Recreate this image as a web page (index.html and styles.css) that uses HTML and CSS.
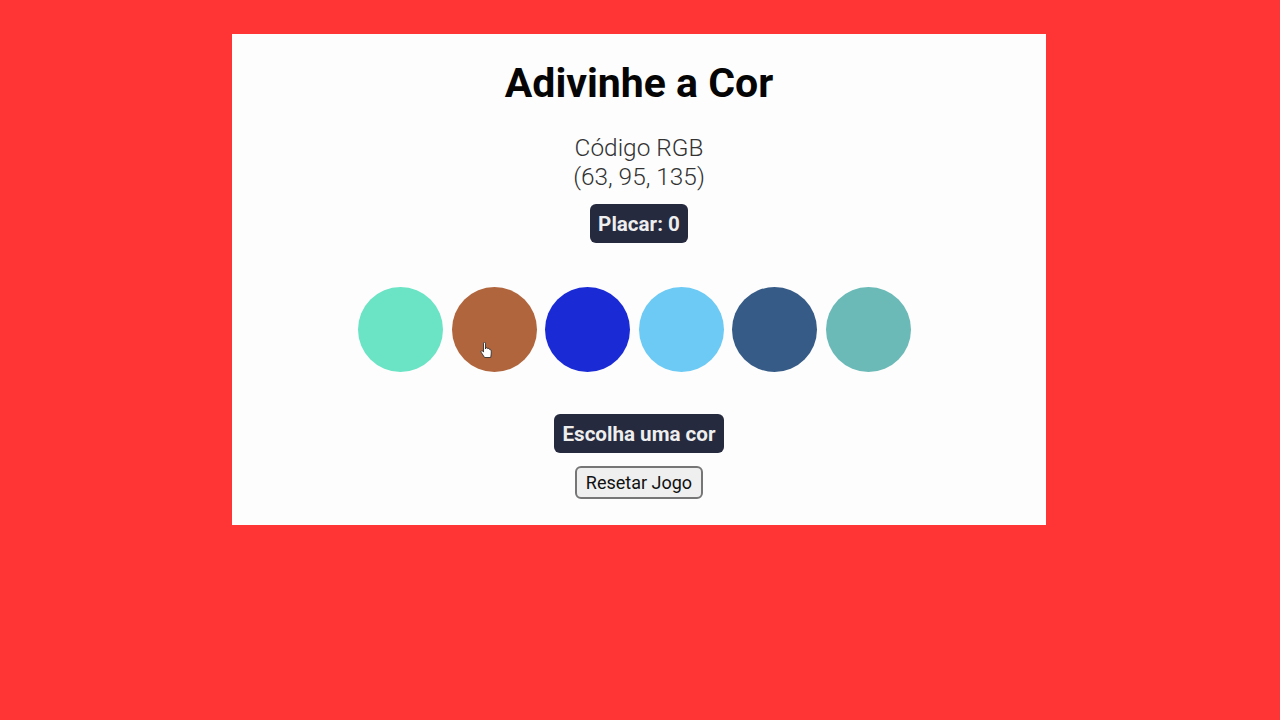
FILE: index.html
```html
<!DOCTYPE html>
<html lang="pt">
<head>
<meta charset="utf-8">
<title>Adivinhe a Cor</title>
<link rel="stylesheet" href="styles.css">
</head>
<body>
<main class="card">
  <h1 class="title">Adivinhe a Cor</h1>
  <p class="code">Código RGB<br>(63, 95, 135)</p>
  <div class="badge">Placar: 0</div>
  <div class="circles">
    <div class="circle c1"></div>
    <div class="circle c2">
      <svg class="cursor" width="13" height="17" viewBox="0 0 13 17" aria-hidden="true">
        <path d="M3.5 1.2c0-.6.5-1 1-1s1 .4 1 1V7l.4-1.1c.5-.4 1.300-.3 1.6.3l.2.6.2-.2c.5-.4 1.3-.2 1.5.4l.1.4c.5-.3 1.2-.1 1.4.5.4 1 .5 2.6.3 4.1L10.7 15.5H4.6L1.2 10.3c-.4-.6-.2-1.3.4-1.5.5-.2 1 0 1.3.4l.6.9z" fill="#fff" stroke="#222" stroke-width=".8" stroke-linejoin="round"/>
      </svg>
    </div>
    <div class="circle c3"></div>
    <div class="circle c4"></div>
    <div class="circle c5"></div>
    <div class="circle c6"></div>
  </div>
  <div class="badge status">Escolha uma cor</div>
  <button class="reset">Resetar Jogo</button>
</main>
</body>
</html>
```
FILE: styles.css
```css
html, body {
  margin: 0;
  padding: 0;
}
body {
  background: #ff3535;
  font-family: Roboto, "Liberation Sans", sans-serif;
  height: 720px;
  overflow: hidden;
}
.card {
  width: 814px;
  height: 491px;
  margin: 34px 0 0 232px;
  background: #fdfdfd;
  padding: 26px 0 0;
  display: flex;
  flex-direction: column;
  align-items: center;
  box-sizing: border-box;
}
.title {
  margin: 0;
  font-size: 41px;
  line-height: 47px;
  font-weight: 700;
  color: #050505;
}
.code {
  margin: 26px 0 0;
  font-size: 24.4px;
  line-height: 29px;
  font-weight: 300;
  color: #333;
  text-align: center;
}
.badge {
  margin-top: 13px;
  height: 39px;
  padding: 0 8px;
  display: flex;
  align-items: center;
  background: #252a3e;
  color: #eeeeee;
  font-size: 20.6px;
  font-weight: 700;
  border-radius: 6px;
}
.circles {
  margin-top: 44px;
  display: flex;
  gap: 8.5px;
  padding-right: 9px;
}
.circle {
  width: 85px;
  height: 85px;
  border-radius: 50%;
  position: relative;
}
.c1 { background: #6ae4c4; }
.c2 { background: #b0653d; }
.c3 { background: #1a2bd6; }
.c4 { background: #6ccaf4; }
.c5 { background: #365b87; }
.c6 { background: #6bbab7; }
.cursor {
  position: absolute;
  left: 28px;
  top: 55px;
}
.status {
  margin-top: 42px;
}
.reset {
  margin-top: 13px;
  height: 33px;
  width: 128px;
  padding: 0;
  font-family: Roboto, "Liberation Sans", sans-serif;
  font-size: 18px;
  color: #111;
  background: #efefef;
  border: 2px solid #767676;
  border-radius: 6px;
}
```
